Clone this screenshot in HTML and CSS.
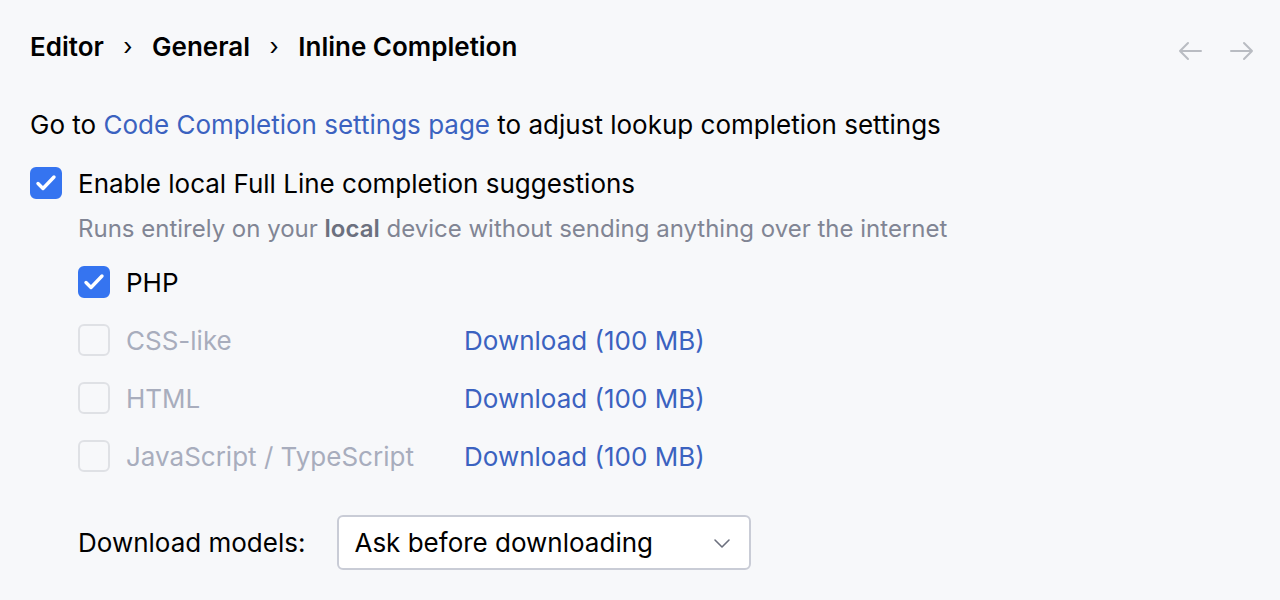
FILE: index.html
```html
<!DOCTYPE html>
<html lang="en">
<head>
    <meta charset="UTF-8">
    <title>Inline Completion</title>
    <link rel="stylesheet" href="styles.css">
</head>
<body>
    <div class="page">
        <header class="top">
            <div class="crumbs">
                <span>Editor</span>
                <span class="sep">›</span>
                <span>General</span>
                <span class="sep">›</span>
                <span>Inline Completion</span>
            </div>
            <div class="nav-arrows">
                <svg width="26" height="20" viewBox="0 0 26 20"><path d="M24 10H3M11 2L3 10l8 8" fill="none" stroke="#b9bcc2" stroke-width="2" stroke-linecap="round" stroke-linejoin="round"/></svg>
                <svg width="26" height="20" viewBox="0 0 26 20"><path d="M2 10h21M15 2l8 8-8 8" fill="none" stroke="#b9bcc2" stroke-width="2" stroke-linecap="round" stroke-linejoin="round"/></svg>
            </div>
        </header>

        <p class="intro">Go to <a href="#" class="link">Code Completion settings page</a> to adjust lookup completion settings</p>

        <label class="check-row">
            <span class="box checked">
                <svg width="24" height="20" viewBox="0 0 24 20"><path d="M4 10.5l5 5L20 4" fill="none" stroke="#fff" stroke-width="3.4" stroke-linecap="round" stroke-linejoin="round"/></svg>
            </span>
            Enable local Full Line completion suggestions
        </label>

        <div class="nested">
            <p class="hint">Runs entirely on your <b>local</b> device without sending anything over the internet</p>

            <label class="check-row lang">
                <span class="box checked">
                    <svg width="24" height="20" viewBox="0 0 24 20"><path d="M4 10.5l5 5L20 4" fill="none" stroke="#fff" stroke-width="3.4" stroke-linecap="round" stroke-linejoin="round"/></svg>
                </span>
                PHP
            </label>

            <div class="lang-row">
                <label class="check-row lang disabled"><span class="box"></span>CSS-like</label>
                <a href="#" class="link">Download (100 MB)</a>
            </div>
            <div class="lang-row">
                <label class="check-row lang disabled"><span class="box"></span>HTML</label>
                <a href="#" class="link">Download (100 MB)</a>
            </div>
            <div class="lang-row">
                <label class="check-row lang disabled"><span class="box"></span>JavaScript / TypeScript</label>
                <a href="#" class="link">Download (100 MB)</a>
            </div>

            <div class="models">
                <span>Download models:</span>
                <div class="combo">
                    <span>Ask before downloading</span>
                    <svg width="18" height="12" viewBox="0 0 18 12"><path d="M2 3l7 7 7-7" fill="none" stroke="#6c707e" stroke-width="1.6" stroke-linecap="round" stroke-linejoin="round"/></svg>
                </div>
            </div>
        </div>
    </div>
</body>
</html>
```

FILE: styles.css
```css
body {
    margin: 0;
    background-color: #f7f8fa;
    font-family: Inter, "Noto Sans", sans-serif;
    font-size: 26px;
    color: #000;
}

.page {
    padding: 0 30px;
}

.top {
    display: flex;
    justify-content: space-between;
    align-items: center;
    height: 92px;
}

.crumbs {
    display: flex;
    align-items: center;
    gap: 19.5px;
    font-weight: 600;
    font-size: 26px;
}

.crumbs .sep {
    font-weight: 400;
    font-size: 24px;
}

.nav-arrows {
    display: flex;
    gap: 26px;
    margin-right: -5px;
    padding-top: 10px;
}

.intro {
    margin: 18px 0 0;
    line-height: 30px;
}

.link {
    color: #3b62c0;
    text-decoration: none;
}

.check-row {
    display: flex;
    align-items: center;
    gap: 16px;
    height: 32px;
    margin-top: 27px;
}

.box {
    width: 32px;
    height: 32px;
    box-sizing: border-box;
    border-radius: 6px;
    border: 2px solid #dfe1e5;
    background-color: #f7f8fa;
    display: flex;
    align-items: center;
    justify-content: center;
    flex-shrink: 0;
}

.box.checked {
    background-color: #3574f0;
    border-color: #3574f0;
}

.nested {
    padding-left: 48px;
}

.hint {
    margin: 15px 0 0;
    line-height: 30px;
    font-size: 24px;
    color: #818594;
}

.hint b {
    font-weight: 600;
    color: #6c707e;
}

.lang {
    margin-top: 22px;
}

.lang-row {
    display: flex;
    align-items: center;
    margin-top: 26px;
}

.lang-row .check-row {
    margin-top: 0;
    width: 386px;
}

.disabled {
    color: #a8adbd;
}

.models {
    display: flex;
    align-items: center;
    gap: 32px;
    margin-top: 43px;
}

.combo {
    width: 414px;
    height: 55px;
    box-sizing: border-box;
    border: 2px solid #c9ccd6;
    border-radius: 6px;
    background-color: #fff;
    display: flex;
    align-items: center;
    justify-content: space-between;
    padding: 0 18px 0 15px;
}
```
